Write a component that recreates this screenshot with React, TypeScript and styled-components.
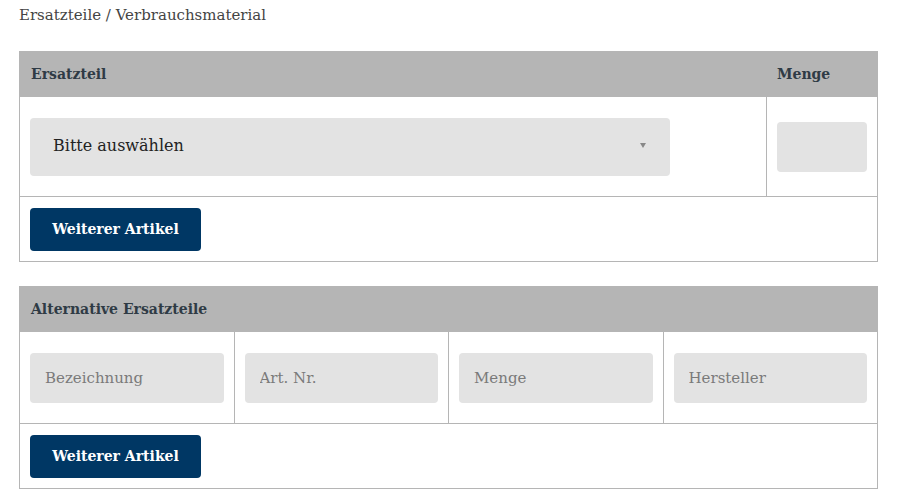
import React from "react";
import styled, { createGlobalStyle } from "styled-components";

const GlobalStyle = createGlobalStyle`
  html, body {
    margin: 0;
    padding: 0;
    background: #ffffff;
  }
  body {
    font-family: "DejaVu Serif", "Liberation Serif", serif;
    color: #333;
  }
`;

const Page = styled.div`
  padding: 4px 43px 0 19px;
  width: 859px;
`;

const Title = styled.div`
  font-size: 15px;
  line-height: 22px;
  color: #444;
  margin-bottom: 25px;
`;

const Table = styled.table`
  width: 100%;
  border-collapse: collapse;
  table-layout: fixed;
  margin-bottom: 24px;
  border: 1px solid #b5b5b5;
`;

const HeadCell = styled.th<{ $width?: number }>`
  background: #b5b5b5;
  text-align: left;
  font-size: 14px;
  font-weight: bold;
  color: #2f3b45;
  height: 44px;
  padding: 0 11px;
  ${(p) => (p.$width ? `width: ${p.$width}px;` : "")}
`;

const Cell = styled.td<{ $height: number }>`
  border: 1px solid #b5b5b5;
  height: ${(p) => p.$height}px;
  padding: 0 10px;
  vertical-align: middle;
`;

const ButtonCell = styled.td`
  border: 1px solid #b5b5b5;
  height: 64px;
  padding: 0 10px;
`;

const SelectBox = styled.div`
  width: 640px;
  height: 58px;
  box-sizing: border-box;
  background: #e3e3e3;
  border-radius: 4px;
  display: flex;
  align-items: center;
  justify-content: space-between;
  padding: 0 24px 2px 23px;
  font-size: 16px;
  color: #222;
`;

const Arrow = styled.span`
  width: 0;
  height: 0;
  border-left: 3.5px solid transparent;
  border-right: 3.5px solid transparent;
  border-top: 5px solid #888;
`;

const Input = styled.input`
  display: block;
  width: 100%;
  height: 50px;
  box-sizing: border-box;
  border: none;
  outline: none;
  background: #e3e3e3;
  border-radius: 4px;
  padding: 0 15px;
  font-family: inherit;
  font-size: 15px;
  color: #333;
  &::placeholder {
    color: #7a7a7a;
  }
`;

const Button = styled.button`
  height: 43px;
  width: 171px;
  background: #003764;
  color: #fff;
  border: none;
  border-radius: 4px;
  font-family: inherit;
  font-weight: bold;
  font-size: 14px;
  cursor: pointer;
`;

const placeholders = ["Bezeichnung", "Art. Nr.", "Menge", "Hersteller"];

export default function App() {
  return (
    <>
      <GlobalStyle />
      <Page>
        <Title>Ersatzteile / Verbrauchsmaterial</Title>
        <Table>
          <thead>
            <tr>
              <HeadCell>Ersatzteil</HeadCell>
              <HeadCell $width={89}>Menge</HeadCell>
            </tr>
          </thead>
          <tbody>
            <tr>
              <Cell $height={99}>
                <SelectBox>
                  <span>Bitte auswählen</span>
                  <Arrow />
                </SelectBox>
              </Cell>
              <Cell $height={99}>
                <Input />
              </Cell>
            </tr>
            <tr>
              <ButtonCell colSpan={2}>
                <Button>Weiterer Artikel</Button>
              </ButtonCell>
            </tr>
          </tbody>
        </Table>
        <Table>
          <thead>
            <tr>
              <HeadCell colSpan={4}>Alternative Ersatzteile</HeadCell>
            </tr>
          </thead>
          <tbody>
            <tr>
              {placeholders.map((p) => (
                <Cell key={p} $height={91}>
                  <Input placeholder={p} />
                </Cell>
              ))}
            </tr>
            <tr>
              <ButtonCell colSpan={4}>
                <Button>Weiterer Artikel</Button>
              </ButtonCell>
            </tr>
          </tbody>
        </Table>
      </Page>
    </>
  );
}
